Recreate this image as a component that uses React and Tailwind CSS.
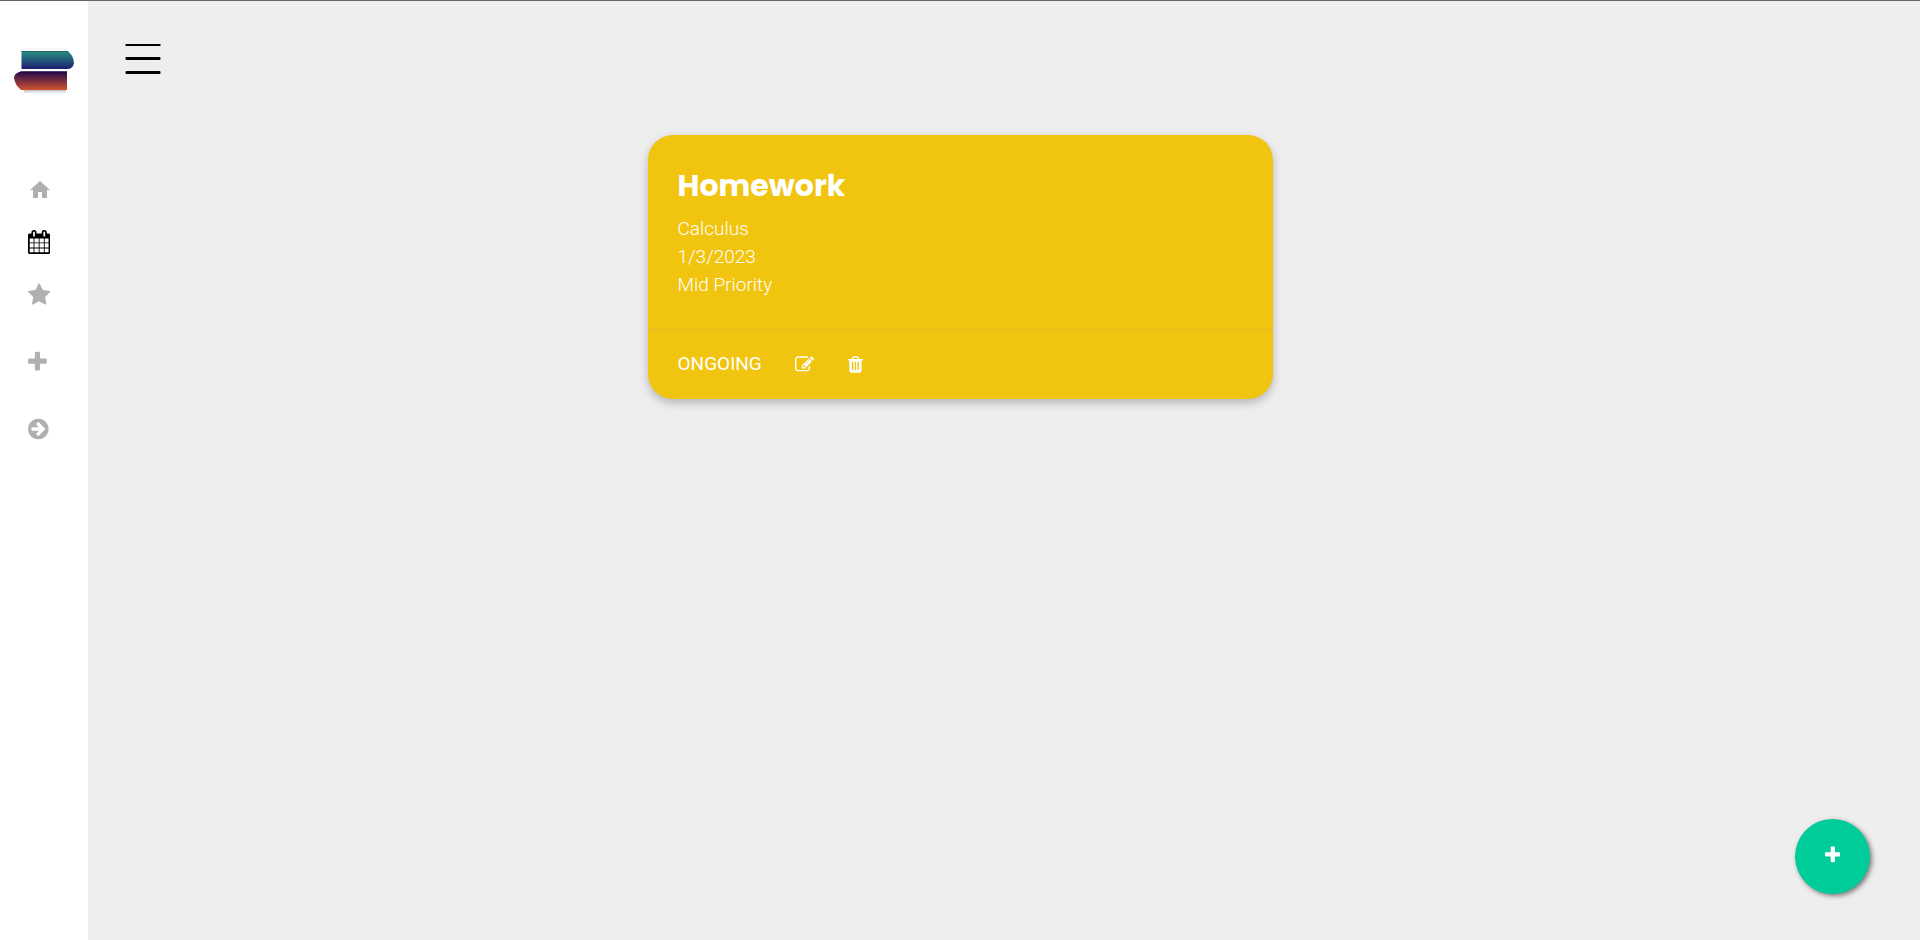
const icons = {
  home: {
    box: "0 0 24 24",
    d: "M10 20v-6h4v6h5v-8h3L12 3 2 12h3v8z",
  },
  calendar: {
    box: "64 0 1664 1792",
    d: "M192 1664h288v-288h-288v288zm352 0h320v-288h-320v288zm-352-352h288v-320h-288v320zm352 0h320v-320h-320v320zm-352-384h288v-288h-288v288zm736 736h320v-288h-320v288zm-384-736h320v-288h-320v288zm768 736h288v-288h-288v288zm-384-352h320v-320h-320v320zm-352-864v-288q0-13-9.5-22.5t-22.5-9.5h-64q-13 0-22.5 9.5t-9.5 22.5v288q0 13 9.5 22.5t22.5 9.5h64q13 0 22.5-9.5t9.5-22.5zm736 864h288v-320h-288v320zm-384-384h320v-288h-320v288zm384 0h288v-288h-288v288zm32-480v-288q0-13-9.5-22.5t-22.5-9.5h-64q-13 0-22.5 9.5t-9.5 22.5v288q0 13 9.5 22.5t22.5 9.5h64q13 0 22.5-9.5t9.5-22.5zm384-64v1280q0 52-38 90t-90 38h-1408q-52 0-90-38t-38-90v-1280q0-52 38-90t90-38h128v-96q0-66 47-113t113-47h64q66 0 113 47t47 113v96h384v-96q0-66 47-113t113-47h64q66 0 113 47t47 113v96h128q52 0 90 38t38 90z",
  },
  star: {
    box: "64 -64 1664 1792",
    d: "M1728 647q0 22-26 48l-363 354 86 500q1 7 1 20 0 21-10.5 35.5t-30.5 14.5q-19 0-40-12l-449-236-449 236q-22 12-40 12-21 0-31.5-14.5t-10.5-35.5q0-6 2-20l86-500-364-354q-25-27-25-48 0-37 56-46l502-73 225-455q19-41 49-41t49 41l225 455 502 73q56 9 56 46z",
  },
  plus: {
    box: "192 0 1408 1792",
    d: "M1600 736v192q0 40-28 68t-68 28h-416v416q0 40-28 68t-68 28h-192q-40 0-68-28t-28-68v-416h-416q-40 0-68-28t-28-68v-192q0-40 28-68t68-28h416v-416q0-40 28-68t68-28h192q40 0 68 28t28 68v416h416q40 0 68 28t28 68z",
  },
  arrow: {
    box: "128 0 1536 1792",
    d: "M1413 896q0-27-18-45l-91-91-362-362q-18-18-45-18t-45 18l-91 91q-18 18-18 45t18 45l189 189h-502q-26 0-45 19t-19 45v128q0 26 19 45t45 19h502l-189 189q-19 19-19 45t19 45l91 91q18 18 45 18t45-18l362-362 91-91q18-18 18-45zm251 0q0 209-103 385.5t-279.5 279.5-385.5 103-385.5-103-279.5-279.5-103-385.5 103-385.5 279.5-279.5 385.5-103 385.5 103 279.5 279.5 103 385.5z",
  },
  edit: {
    box: "0 0 1792 1792",
    d: "M888 1184l116-116-152-152-116 116v56h96v96h56zm440-720q-16-16-33 1l-350 350q-17 17-1 33t33-1l350-350q17-17 1-33zm80 594v190q0 119-84.5 203.5t-203.5 84.5h-832q-119 0-203.5-84.5t-84.5-203.5v-832q0-119 84.5-203.5t203.5-84.5h832q63 0 117 25 15 7 18 23 3 17-9 29l-49 49q-14 14-32 8-23-6-45-6h-832q-66 0-113 47t-47 113v832q0 66 47 113t113 47h832q66 0 113-47t47-113v-126q0-13 9-22l64-64q15-15 35-7t20 29zm-96-738l288 288-672 672h-288v-288zm444 132l-92 92-288-288 92-92q28-28 68-28t68 28l152 152q28 28 28 68t-28 68z",
  },
  trash: {
    box: "192 0 1408 1792",
    d: "M704 1376v-704q0-14-9-23t-23-9h-64q-14 0-23 9t-9 23v704q0 14 9 23t23 9h64q14 0 23-9t9-23zm256 0v-704q0-14-9-23t-23-9h-64q-14 0-23 9t-9 23v704q0 14 9 23t23 9h64q14 0 23-9t9-23zm256 0v-704q0-14-9-23t-23-9h-64q-14 0-23 9t-9 23v704q0 14 9 23t23 9h64q14 0 23-9t9-23zm-544-992h448l-48-117q-7-9-17-11h-317q-10 2-17 11zm928 32v64q0 14-9 23t-23 9h-96v948q0 83-47 143.5t-113 60.5h-832q-66 0-113-58.5t-47-141.5v-952h-96q-14 0-23-9t-9-23v-64q0-14 9-23t23-9h309l70-167q15-37 54-63t79-26h320q40 0 79 26t54 63l70 167h309q14 0 23 9t9 23z",
  },
};

function Icon({ name, className }) {
  const { box, d } = icons[name];
  return (
    <svg viewBox={box} fill="currentColor" className={className} aria-hidden="true">
      <path d={d} />
    </svg>
  );
}

function Logo() {
  return (
    <svg viewBox="0 0 64 50" className="h-[50px] w-16" aria-hidden="true">
      <defs>
        <linearGradient id="top" x1="0" y1="0" x2="0" y2="1">
          <stop offset="0" stopColor="#2a8f83" />
          <stop offset="1" stopColor="#1c1f6e" />
        </linearGradient>
        <linearGradient id="bottom" x1="0" y1="0" x2="0" y2="1">
          <stop offset="0" stopColor="#22084f" />
          <stop offset="1" stopColor="#d0532f" />
        </linearGradient>
      </defs>
      <path d="M11 3h42q2 0 3 2H10q0-2 1-2z" fill="#f9f9f9" />
      <path d="M9.500 6h46q6 4 6.500 12q-1 6-7 6h-45.500z" fill="url(#top)" />
      <path d="M9.500 6h46l1 1h-47z" fill="#1f6b60" />
      <path d="M11 45h43q0 3-2 3h-38q-2 0-3-3z" fill="#c9c9c9" />
      <path d="M13 46.500h40v1.500h-38q-1 0-2-1.500z" fill="#ececec" />
      <path d="M55 26.500v18.500h-46q-6-5-7-12q0-5 7-6.500z" fill="url(#bottom)" />
      <path d="M9 26.500h46v1h-48z" fill="#150433" />
    </svg>
  );
}

const nav = [
  { name: "home", label: "Home", style: "text-[#b0b0b0]" },
  { name: "calendar", label: "Calendar", style: "text-black" },
  { name: "star", label: "Favourites", style: "text-[#b0b0b0] mb-4" },
  { name: "plus", label: "New task", style: "text-[#b0b0b0] mb-[15px]" },
  { name: "arrow", label: "Log out", style: "text-[#b0b0b0]" },
];

export default function App() {
  return (
    <div className="flex min-h-screen border-t border-[#666] bg-[#eee] font-['Roboto',sans-serif]">
      <aside className="w-[88px] shrink-0 bg-white pt-11">
        <a href="#" aria-label="Dashboard" className="block pl-3">
          <Logo />
        </a>
        <nav className="mt-[83px] flex flex-col items-start gap-7 pl-7">
          {nav.map((item) => (
            <a key={item.name} href="#" aria-label={item.label} className={item.style}>
              <Icon name={item.name} className="h-6 w-auto" />
            </a>
          ))}
        </nav>
      </aside>

      <main className="flex-1 pt-[42px]">
        <button type="button" aria-label="Toggle menu" className="ml-[37px] block">
          <svg viewBox="0 0 36 32" className="h-8 w-9" aria-hidden="true">
            <rect x="0.500" y="1" width="35" height="2" rx="0.500" />
            <rect x="0.500" y="14" width="35" height="3" rx="1" />
            <rect x="0.500" y="28" width="35" height="3" rx="1" />
          </svg>
        </button>

        <div className="flex justify-center pt-[60px] pr-[88px]">
          <article className="w-full max-w-[625px] overflow-hidden rounded-[25px] bg-[#f1c40f] text-[19px] text-white shadow-[0_4px_10px_0_rgba(0,0,0,0.24)]">
            <div className="px-[30px] py-[30px]">
              <h2 className="mb-2 font-['Poppins','Inter',sans-serif] text-[30px] leading-[42px] font-bold">Homework</h2>
              <div className="leading-7 font-light">
                <p>Calculus</p>
                <p>1/3/2023</p>
                <p>Mid Priority</p>
              </div>
            </div>
            <footer className="flex items-center border-t border-[rgba(160,160,160,0.2)] px-[30px] pt-5 pb-[21px]">
              <a href="#" className="leading-7">ONGOING</a>
              <button type="button" aria-label="Edit task" className="ml-[33px]">
                <Icon name="edit" className="size-[19px]" />
              </button>
              <button type="button" aria-label="Delete task" className="ml-[34px]">
                <Icon name="trash" className="h-[19px] w-auto" />
              </button>
            </footer>
          </article>
        </div>
      </main>

      <button
        type="button"
        aria-label="Add task"
        className="fixed right-[50px] bottom-[46px] flex size-[75px] items-center justify-center rounded-full bg-[#00cc99] pb-[3px] text-white shadow-[2px_2px_5px_#777]"
      >
        <Icon name="plus" className="h-5 w-auto" />
      </button>
    </div>
  );
}
